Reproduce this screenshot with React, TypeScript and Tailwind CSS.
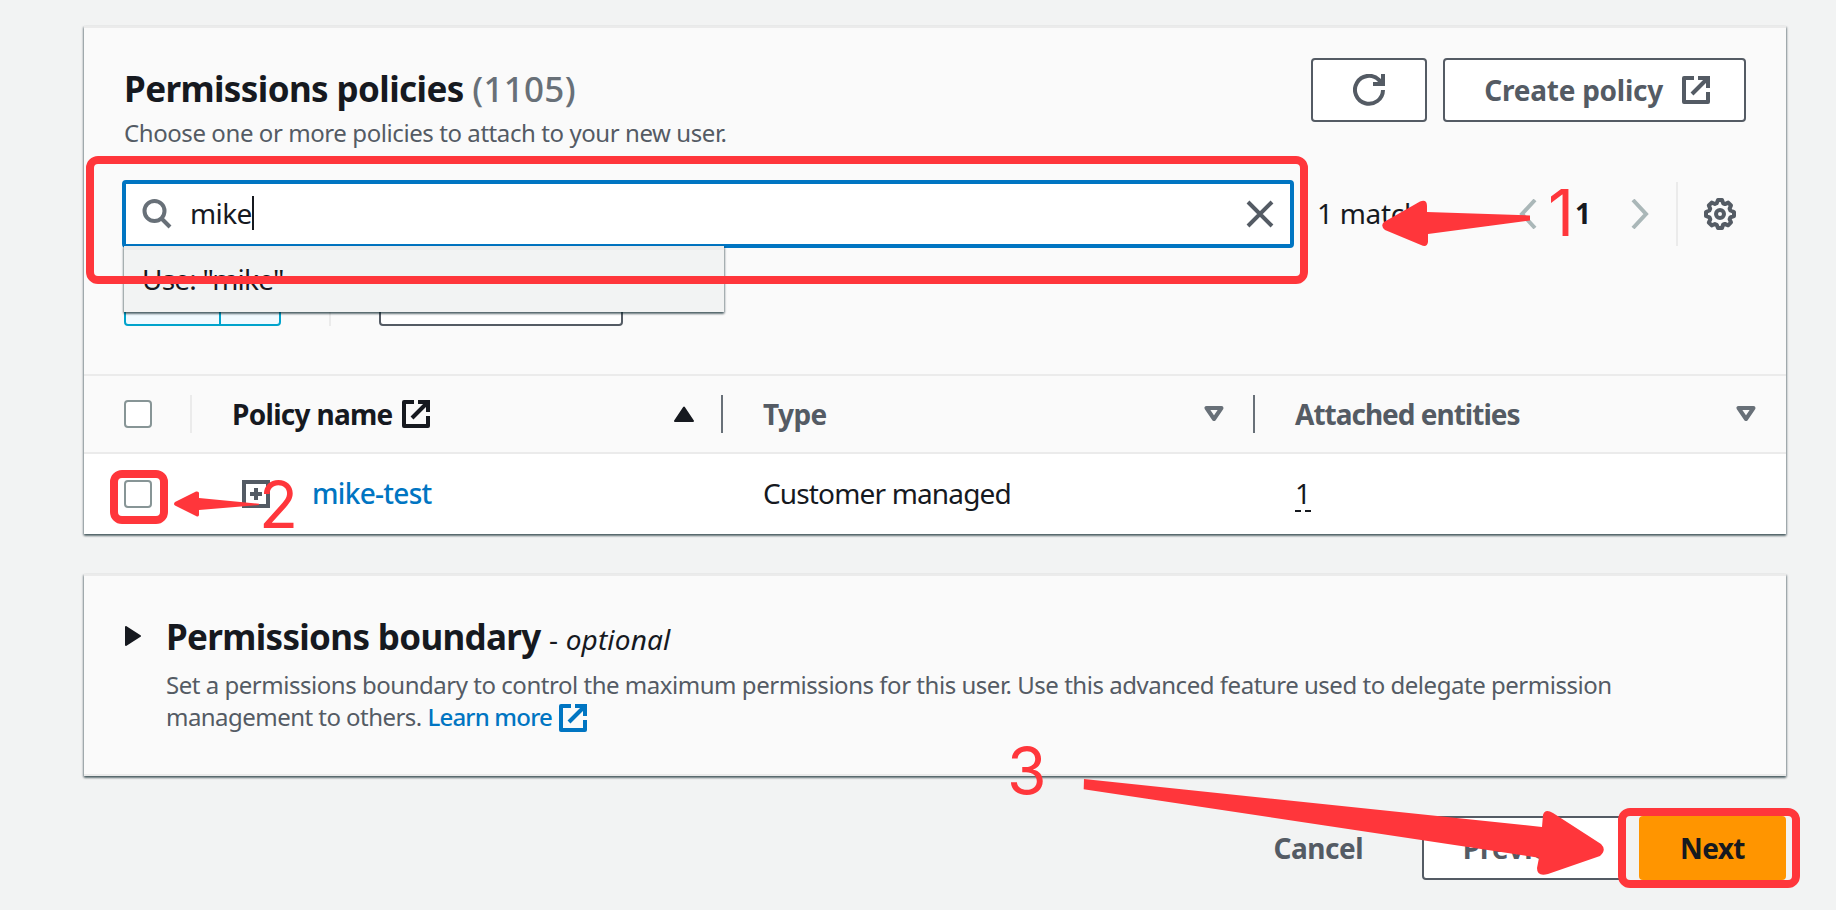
import React from 'react';

const RED = '#ff363b';

function External({ className = '' }: { className?: string }) {
  return (
    <svg viewBox="0 0 28 28" className={className} fill="none" stroke="currentColor" strokeWidth="4" aria-hidden="true">
      <path d="M12 2H2v24h24V16" strokeLinejoin="round" />
      <path d="M16 2h10v10" />
      <path d="M26 2 10 18" />
    </svg>
  );
}

function Gear() {
  return (
    <svg viewBox="0 0 32 32" className="h-8 w-8" fill="none" stroke="#545b64" strokeWidth="4" strokeLinejoin="round" aria-hidden="true">
      <path d="M14 2h4l1.200 3.300 1.800.8 3.200-1.500 2.800 2.900-1.400 3.100.8 1.900L30 14v4l-3.600 1.300-.8 1.900 1.400 3.200-2.900 2.900-3.200-1.400-1.800.8L18 30h-4l-1.300-3.200-1.800-.8-3.200 1.400-2.900-2.900 1.500-3.200-.8-1.900L2 18v-4l3.400-1.500.8-1.900-1.400-3.100 2.900-2.900L10.900 6l1.800-.8z" />
      <circle cx="16" cy="16" r="4" />
    </svg>
  );
}

function Panel({ className = '', children }: { className?: string; children: React.ReactNode }) {
  return (
    <section className={`relative w-[1702px] border-t-2 border-[#ebebeb] bg-[#fafafa] shadow-[0_2px_2px_0_rgba(0,28,36,0.45),1px_1px_2px_0_rgba(0,28,36,0.3),-1px_1px_2px_0_rgba(0,28,36,0.3)] ${className}`}>
      {children}
    </section>
  );
}

function Checkbox() {
  return <span className="block h-7 w-7 rounded-[4px] border-2 border-[#879596] bg-white" />;
}

function DownTriangle() {
  return (
    <svg viewBox="0 0 20 16" className="h-4 w-5" fill="none" stroke="#687078" strokeWidth="4" strokeLinejoin="round" aria-hidden="true">
      <path d="M2.500 2h15L10 13z" />
    </svg>
  );
}

function Annotations() {
  return (
    <div className="pointer-events-none absolute inset-0 z-20 font-['Inter',sans-serif] text-[64px] font-normal leading-[64px] text-[#ff363b]">
      <div className="absolute left-[86px] top-[156px] h-[128px] w-[1222px] rounded-[12px] border-8 border-[#ff363b]" />
      <div className="absolute left-[110px] top-[470px] h-[54px] w-[58px] rounded-[12px] border-8 border-[#ff363b]" />
      <div className="absolute left-[1618px] top-[808px] h-[80px] w-[182px] rounded-[12px] border-8 border-[#ff363b]" />
      <svg className="absolute inset-0 h-[910px] w-[1836px]" viewBox="0 0 1836 910" fill={RED} aria-hidden="true">
        <path d="M1384 222 1420 201.500Q1427 199 1427 206V212L1530 215.500V220.500L1428 234V242Q1427 248 1421 245L1385 230Q1380 226 1384 222Z" />
        <path d="M175 502 196 491.500Q199 491 199 493V498L259 503.700V505L199 510V514.500Q199 517.500 196 516L175 505.500Q173 504 175 502Z" />
        <path d="M1084 779 1542 827 1543 815Q1545 808 1553 813L1601 844Q1607 850 1600 856L1548 874Q1537 877 1537 868L1539 857.700 1083.700 789.300Z" />
      </svg>
      <span className="absolute left-[1548px] top-[181px]">1</span>
      <span className="absolute left-[259px] top-[473px]">2</span>
      <span className="absolute left-[1007px] top-[739px]">3</span>
    </div>
  );
}

export default function App() {
  return (
    <main className="relative h-[910px] w-[1836px] overflow-hidden bg-[#f2f3f3] pl-[84px] pt-[26px] font-['Noto_Sans',sans-serif] text-[28px] leading-[36px] text-[#16191f]">
      <Panel className="h-[508px]">
        <header className="flex h-[152px] justify-between pl-[40px] pr-[40px] pt-[30px]">
          <div className="pt-[5px]">
            <h2 className="text-[35px] font-bold leading-[52px] tracking-[-0.6px]">
              Permissions policies <span className="font-medium tracking-[0.3px] text-[#687078]">(1105)</span>
            </h2>
            <p className="text-[24px] leading-[36px] tracking-[-0.42px] text-[#545b64]">Choose one or more policies to attach to your new user.</p>
          </div>
          <div className="flex h-16 gap-4 font-bold text-[#545b64]">
            <button className="flex w-[116px] items-center justify-center rounded-[4px] border-2 border-[#545b64] bg-white">
              <svg viewBox="0 0 32 32" className="h-8 w-8" fill="none" stroke="currentColor" strokeWidth="4" aria-hidden="true">
                <path d="M30 16a14 14 0 1 1-4-10l4 4" />
                <path d="M30 0v10H20" />
              </svg>
            </button>
            <button className="flex w-[303px] items-center justify-end gap-[19px] rounded-[4px] border-2 border-[#545b64] bg-white pr-[34px] tracking-[-0.25px]">
              Create policy
              <External className="h-7 w-7" />
            </button>
          </div>
        </header>
        <div className="flex h-[68px] items-center pl-[38px]">
          <div className="relative flex h-[68px] w-[1172px] items-center rounded-[4px] border-4 border-[#0075c2] bg-white pl-[16px] pr-[16px]">
            <svg viewBox="0 0 30 30" className="h-[30px] w-[30px]" fill="none" stroke="#687078" strokeWidth="4" aria-hidden="true">
              <circle cx="12.500" cy="12" r="10" />
              <path d="m19 19 9 9" />
            </svg>
            <span className="ml-[18px] mr-auto flex items-center pb-[2px] tracking-[-0.6px]">mike<i className="block h-[34px] w-[2px] bg-[#16191f]" /></span>
            <svg viewBox="0 0 28 28" className="h-7 w-7" fill="none" stroke="#545b64" strokeWidth="4" aria-hidden="true">
              <path d="m2 2 24 24M26 2 2 26" />
            </svg>
            <div className="absolute left-[-2px] top-[62px] z-10 h-[66px] w-[600px] border-t-4 border-[#ebebeb] bg-[#f2f3f3] pl-[18px] pt-[11px] tracking-[-0.8px] shadow-[0_2px_2px_0_rgba(0,28,36,0.45),1px_1px_2px_0_rgba(0,28,36,0.3),-1px_1px_2px_0_rgba(0,28,36,0.3)]">
              Use: "mike"
            </div>
          </div>
          <span className="ml-[23px] w-[202px] pb-[2px] tracking-[-0.3px]">1 match</span>
          <svg viewBox="0 0 18 30" className="h-[30px] w-[18px]" fill="none" stroke="#aab7b8" strokeWidth="4" aria-hidden="true"><path d="M16 1 3 15l13 14" /></svg>
          <b className="ml-[38px] w-[56px] pb-[2px]">1</b>
          <svg viewBox="0 0 18 30" className="h-[30px] w-[18px]" fill="none" stroke="#aab7b8" strokeWidth="4" aria-hidden="true"><path d="m2 1 13 14L2 29" /></svg>
          <i className="ml-[27px] mr-[26px] h-16 w-[2px] bg-[#ebebeb]" />
          <Gear />
        </div>
        <div className="flex h-[78px] items-start pl-[40px]">
          <div className="flex h-[78px] w-[157px] rounded-[4px] border-2 border-[#00a3cc] bg-[#f1faff]"><i className="ml-[93px] w-[2px] bg-[#00a3cc]" /></div>
          <i className="ml-[48px] mr-[48px] h-[78px] w-[2px] bg-[#ebebeb]" />
          <div className="h-[78px] w-[244px] rounded-[4px] border-2 border-[#545b64] bg-white" />
        </div>
        <div className="mt-[48px] flex h-[80px] items-center border-y-2 border-[#ebebeb] pl-[40px] font-bold text-[#545b64]">
          <Checkbox />
          <i className="ml-[38px] mr-[40px] h-[38px] w-[2px] bg-[#ebebeb]" />
          <div className="flex w-[489px] items-center gap-[9px] tracking-[-0.7px] text-[#16191f]">
            Policy name <External className="h-7 w-7" />
            <svg viewBox="0 0 20 16" className="ml-auto mr-[27px] h-4 w-5" fill="#16191f" stroke="#16191f" strokeWidth="2" strokeLinejoin="round" aria-hidden="true"><path d="M10 1.500 1 15h18z" /></svg>
          </div>
          <i className="mr-[40px] h-[38px] w-[2px] bg-[#687078]" />
          <div className="flex w-[490px] items-center justify-between pr-[29px] tracking-[-0.6px]">Type <DownTriangle /></div>
          <i className="mr-[40px] h-[38px] w-[2px] bg-[#687078]" />
          <div className="flex flex-1 items-center justify-between pr-[30px] tracking-[-1px]">Attached entities <DownTriangle /></div>
        </div>
        <div className="flex h-[80px] items-center bg-white pl-[40px]">
          <Checkbox />
          <svg viewBox="0 0 28 28" className="ml-[90px] h-7 w-7" fill="none" stroke="#545b64" strokeWidth="4" aria-hidden="true">
            <path d="M2 2h24v24H2zM8 14h12M14 8v12" />
          </svg>
          <a className="ml-[42px] w-[451px] pb-[2px] font-medium tracking-[-0.7px] text-[#0075c2]">mike-test</a>
          <span className="w-[532px] pb-[2px] tracking-[-0.85px]">Customer managed</span>
          <span className="border-b-2 border-dashed border-[#16191f] leading-[34px]">1</span>
        </div>
      </Panel>

      <Panel className="mt-10 flex h-[202px] gap-[24px] border-b-2 pl-[41px] pt-[39px]">
        <svg viewBox="0 0 17 20" className="mt-[11px] h-5 w-[17px]" fill="#16191f" stroke="#16191f" strokeWidth="2" strokeLinejoin="round" aria-hidden="true"><path d="M1 1v18l14-9z" /></svg>
        <div>
          <h2 className="text-[35px] font-bold leading-[44px] tracking-[-0.67px]">
            Permissions boundary <span className="text-[28px] font-normal tracking-[0.15px]">- <i>optional</i></span>
          </h2>
          <p className="mt-[8px] whitespace-nowrap text-[24px] leading-[32px] tracking-[-0.47px] text-[#545b64]">
            Set a permissions boundary to control the maximum permissions for this user. Use this advanced feature used to delegate permission
            <br />
            <span className="tracking-[-0.54px]">management to others. <a className="font-medium tracking-[-0.8px] text-[#0075c2]">Learn more <External className="relative -top-[2px] ml-[2px] inline h-7 w-7" /></a></span>
          </p>
        </div>
      </Panel>

      <footer className="mt-10 flex h-16 w-[1702px] items-center justify-end font-bold text-[#545b64]">
        <button className="mr-[59px] tracking-[-0.5px]">Cancel</button>
        <button className="mr-4 h-16 w-[201px] rounded-[4px] border-2 border-[#545b64] bg-white">Previous</button>
        <button className="h-16 w-[147px] rounded-[4px] bg-[#ff9500] tracking-[-0.6px] text-[#16191f]">Next</button>
      </footer>
      <Annotations />
    </main>
  );
}
